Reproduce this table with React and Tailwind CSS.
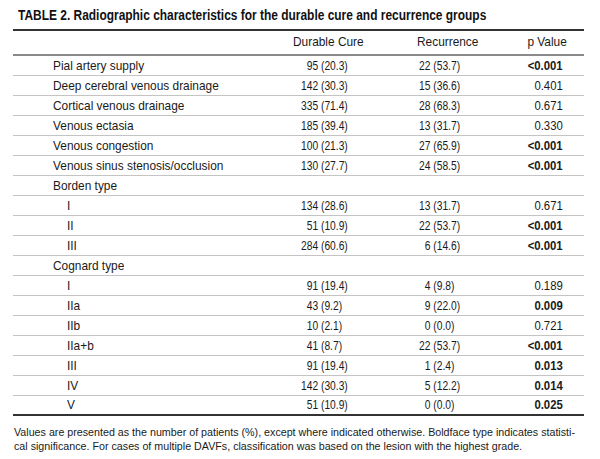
import React from "react";

const F = "\u2007";
const pad = (s, n) => {
  const num = s.split(" ")[0];
  return F.repeat(Math.max(0, n - num.length)) + s;
};

const rows = [
  { label: "Pial artery supply", a: "95 (20.3)", b: "22 (53.7)", p: "<0.001", bold: true },
  { label: "Deep cerebral venous drainage", a: "142 (30.3)", b: "15 (36.6)", p: "0.401" },
  { label: "Cortical venous drainage", a: "335 (71.4)", b: "28 (68.3)", p: "0.671" },
  { label: "Venous ectasia", a: "185 (39.4)", b: "13 (31.7)", p: "0.330" },
  { label: "Venous congestion", a: "100 (21.3)", b: "27 (65.9)", p: "<0.001", bold: true },
  { label: "Venous sinus stenosis/occlusion", a: "130 (27.7)", b: "24 (58.5)", p: "<0.001", bold: true },
  { label: "Borden type", group: true },
  { label: "I", sub: true, a: "134 (28.6)", b: "13 (31.7)", p: "0.671" },
  { label: "II", sub: true, a: "51 (10.9)", b: "22 (53.7)", p: "<0.001", bold: true },
  { label: "III", sub: true, a: "284 (60.6)", b: "6 (14.6)", p: "<0.001", bold: true },
  { label: "Cognard type", group: true },
  { label: "I", sub: true, a: "91 (19.4)", b: "4 (9.8)", p: "0.189" },
  { label: "IIa", sub: true, a: "43 (9.2)", b: "9 (22.0)", p: "0.009", bold: true },
  { label: "IIb", sub: true, a: "10 (2.1)", b: "0 (0.0)", p: "0.721" },
  { label: "IIa+b", sub: true, a: "41 (8.7)", b: "22 (53.7)", p: "<0.001", bold: true },
  { label: "III", sub: true, a: "91 (19.4)", b: "1 (2.4)", p: "0.013", bold: true },
  { label: "IV", sub: true, a: "142 (30.3)", b: "5 (12.2)", p: "0.014", bold: true },
  { label: "V", sub: true, a: "51 (10.9)", b: "0 (0.0)", p: "0.025", bold: true },
];

const cols = "grid grid-cols-[277px_75px_143px_76px]";

const N = ({ children, className = "scale-x-[0.88] origin-left" }) => (
  <span className={`inline-block whitespace-pre ${className}`}>{children}</span>
);

export default function App() {
  return (
    <div className="w-[600px] h-[459px] overflow-hidden bg-white text-[#1a1a1a] font-['Liberation_Sans',Arial,sans-serif] pl-[13px] pr-[16px] pt-[7px]">
      <h1 className="pl-[5px] text-[14px] font-bold leading-[16px] text-[#111] whitespace-nowrap">
        <span className="inline-block scale-x-[0.853] origin-left">
          TABLE 2. Radiographic characteristics for the durable cure and recurrence groups
        </span>
      </h1>
      <div className="mt-[6px] border-t-2 border-[#333]">
        <div className={`${cols} h-[25px] items-center text-[13.5px] border-b-2 border-[#8a8a8a]`}>
          <div />
          <div className="pl-[3px]"><N>Durable Cure</N></div>
          <div className="pl-[52px]"><N>Recurrence</N></div>
          <div className="text-right pr-[17px]"><N className="scale-x-[0.88] origin-right">p Value</N></div>
        </div>
        {rows.map((r, i) => (
          <div
            key={i}
            className={`${cols} h-[20px] items-center text-[13.5px] leading-[16px] ${i === rows.length - 1 ? "border-b-2 border-[#333]" : "border-b border-[#c4c4c4]"}`}
          >
            <div className={r.sub ? "pl-[54px]" : "pl-[40px]"}><N>{r.label}</N></div>
            <div className="pl-[11px]">
              {r.a && <N className="scale-x-[0.76] origin-left">{pad(r.a, 3)}</N>}
            </div>
            <div className="pl-[54px]">
              {r.b && <N className="scale-x-[0.76] origin-left">{pad(r.b, 2)}</N>}
            </div>
            <div className={`text-right pr-[21px] ${r.bold ? "font-bold" : ""}`}>
              {r.p && <N className="scale-x-[0.84] origin-right">{r.p}</N>}
            </div>
          </div>
        ))}
      </div>
      <p className="mt-[9px] pl-[1px] text-[11.5px] leading-[14px] whitespace-nowrap">
        <span className="inline-block scale-x-[0.93] origin-left">
          Values are presented as the number of patients (%), except where indicated otherwise. Boldface type indicates statisti-
          <br />
          cal significance. For cases of multiple DAVFs, classification was based on the lesion with the highest grade.
        </span>
      </p>
    </div>
  );
}
